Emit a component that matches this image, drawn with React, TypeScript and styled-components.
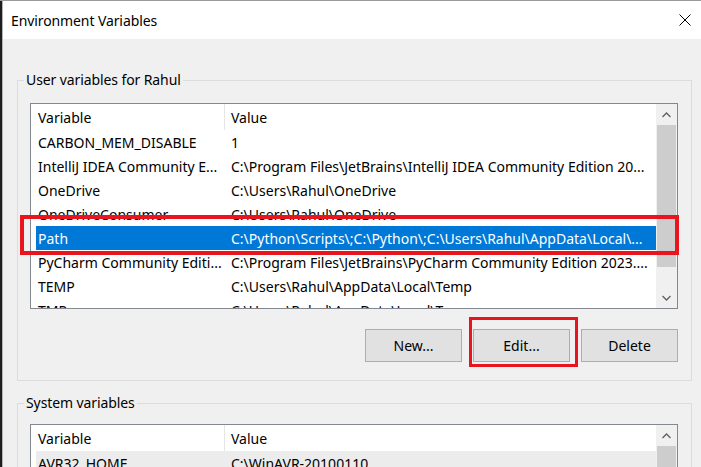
import React from "react";
import styled, { createGlobalStyle } from "styled-components";

const Global = createGlobalStyle`
  html, body { margin: 0; padding: 0; background: #1c1c1c; }
  body { font-family: "Segoe UI", "Noto Sans", sans-serif; overflow: hidden; }
`;

const Screen = styled.div`
  display: flex;
  width: 701px;
  height: 467px;
  overflow: hidden;
  border-top: 1px solid #9a9a9a;
  box-sizing: border-box;
`;

const DesktopEdge = styled.div`
  flex: none;
  width: 2px;
  background: #1e1e1e;
`;

const Window = styled.div`
  flex: 1;
  min-width: 0;
  display: flex;
  flex-direction: column;
  background: #f0f0f0;
  border-left: 1px solid #b4b4b4;
`;

const TitleBar = styled.div`
  flex: none;
  height: 38px;
  background: #ffffff;
  display: flex;
  align-items: center;
  justify-content: space-between;
  padding: 0 10px 0 8px;
`;

const Title = styled.span`
  font-size: 14px;
  letter-spacing: -0.1px;
  color: #000;
`;

const CloseIcon = styled.svg`
  display: block;
  width: 12px;
  height: 12px;
`;

const Body = styled.div`
  padding: 31px 9px 0 14px;
  display: flex;
  flex-direction: column;
`;

const Group = styled.fieldset<{ $mt?: number }>`
  margin: ${(p) => p.$mt ?? 0}px 0 0 0;
  padding: 0 13px 18px 12px;
  border: 1px solid #dcdcdc;
  min-width: 0;
`;

const Legend = styled.legend`
  margin-left: -6px;
  padding: 0 2px;
  font-size: 14px;
  letter-spacing: -0.1px;
  line-height: 20px;
  color: #000;
`;

const ListWrap = styled.div<{ $mt: number; $h: number }>`
  position: relative;
  margin-top: ${(p) => p.$mt}px;
  height: ${(p) => p.$h}px;
`;

const ListBox = styled.div`
  box-sizing: border-box;
  height: 100%;
  border: 1px solid #828790;
  background: #fff;
  display: flex;
  overflow: hidden;
`;

const ListContent = styled.div`
  flex: 1;
  min-width: 0;
  padding-left: 5px;
  overflow: hidden;
`;

const ColumnsRow = styled.div<{ $selected?: boolean; $inactive?: boolean; $header?: boolean }>`
  display: grid;
  grid-template-columns: 189px 1fr;
  height: ${(p) => (p.$header ? 26 : 24)}px;
  align-items: center;
  font-size: 14px;
  color: ${(p) => (p.$selected ? "#fff" : "#000")};
  background: ${(p) => (p.$selected ? "#0078d7" : p.$inactive ? "#ececec" : "transparent")};
`;

const Cell = styled.div<{ $first?: boolean; $divider?: boolean }>`
  height: 100%;
  display: flex;
  align-items: center;
  padding-left: ${(p) => (p.$first ? 2 : 6)}px;
  padding-right: 2px;
  white-space: nowrap;
  overflow: hidden;
  border-right: ${(p) => (p.$divider ? "1px solid #e5e5e5" : "none")};
  box-sizing: border-box;
`;

const ScrollBar = styled.div`
  flex: none;
  width: 21px;
  background: #f0f0f0;
  display: flex;
  flex-direction: column;
`;

const ScrollArrow = styled.div`
  flex: none;
  height: 21px;
  display: flex;
  align-items: center;
  justify-content: center;
`;

const Thumb = styled.div<{ $h: number }>`
  flex: none;
  height: ${(p) => p.$h}px;
  margin: 0 1px;
  background: #cdcdcd;
`;

const Spacer = styled.div`
  flex: 1;
`;

const Chevron = styled.svg`
  display: block;
  width: 9px;
  height: 6px;
`;

const ButtonRow = styled.div`
  margin-top: 20px;
  display: flex;
  justify-content: flex-end;
  gap: 11px;
`;

const ButtonSlot = styled.div`
  position: relative;
`;

const Button = styled.button`
  box-sizing: border-box;
  width: 97px;
  height: 33px;
  padding: 0;
  background: #e1e1e1;
  border: 1px solid #adadad;
  font-family: inherit;
  font-size: 14px;
  color: #000;
  display: block;
`;

const Highlight = styled.div<{ $l: number; $t: number; $w: number; $h: number; $b: number }>`
  position: absolute;
  left: ${(p) => p.$l}px;
  top: ${(p) => p.$t}px;
  width: ${(p) => p.$w}px;
  height: ${(p) => p.$h}px;
  border: ${(p) => p.$b}px solid #e8151f;
  box-sizing: border-box;
  pointer-events: none;
`;

type Row = { name: string; value: string; selected?: boolean; inactive?: boolean };

const userRows: Row[] = [
  { name: "CARBON_MEM_DISABLE", value: "1" },
  { name: "IntelliJ IDEA Community E...", value: "C:\\Program Files\\JetBrains\\IntelliJ IDEA Community Edition 20..." },
  { name: "OneDrive", value: "C:\\Users\\Rahul\\OneDrive" },
  { name: "OneDriveConsumer", value: "C:\\Users\\Rahul\\OneDrive" },
  { name: "Path", value: "C:\\Python\\Scripts\\;C:\\Python\\;C:\\Users\\Rahul\\AppData\\Local\\...", selected: true },
  { name: "PyCharm Community Editi...", value: "C:\\Program Files\\JetBrains\\PyCharm Community Edition 2023...." },
  { name: "TEMP", value: "C:\\Users\\Rahul\\AppData\\Local\\Temp" },
  { name: "TMP", value: "C:\\Users\\Rahul\\AppData\\Local\\Temp" },
];

const systemRows: Row[] = [
  { name: "AVR32_HOME", value: "C:\\WinAVR-20100110", inactive: true },
  { name: "ComSpec", value: "C:\\Windows\\system32\\cmd.exe" },
];

const Up = () => (
  <Chevron viewBox="0 0 9 6">
    <path d="M0.5 5 L4.5 1 L8.5 5" fill="none" stroke="#606060" strokeWidth="1.3" />
  </Chevron>
);

const Down = () => (
  <Chevron viewBox="0 0 9 6">
    <path d="M0.5 1 L4.5 5 L8.5 1" fill="none" stroke="#606060" strokeWidth="1.3" />
  </Chevron>
);

const VarList = ({ rows, thumb }: { rows: Row[]; thumb: number }) => (
  <ListBox>
    <ListContent>
      <ColumnsRow $header>
        <Cell $first $divider>Variable</Cell>
        <Cell>Value</Cell>
      </ColumnsRow>
      {rows.map((r) => (
        <ColumnsRow key={r.name} $selected={r.selected} $inactive={r.inactive}>
          <Cell $first>{r.name}</Cell>
          <Cell>{r.value}</Cell>
        </ColumnsRow>
      ))}
    </ListContent>
    <ScrollBar>
      <ScrollArrow>
        <Up />
      </ScrollArrow>
      <Thumb $h={thumb} />
      <Spacer />
      <ScrollArrow>
        <Down />
      </ScrollArrow>
    </ScrollBar>
  </ListBox>
);

export default function App() {
  return (
    <>
      <Global />
      <Screen>
        <DesktopEdge />
        <Window>
          <TitleBar>
            <Title>Environment Variables</Title>
            <CloseIcon viewBox="0 0 12 12">
              <path d="M0.5 0.5 L11.5 11.5 M11.5 0.5 L0.5 11.5" stroke="#000" strokeWidth="1" fill="none" />
            </CloseIcon>
          </TitleBar>
          <Body>
            <Group>
              <Legend>User variables for Rahul</Legend>
              <ListWrap $mt={13} $h={206}>
                <VarList rows={userRows} thumb={142} />
                <Highlight $l={-10} $t={112} $w={659} $h={40} $b={4} />
              </ListWrap>
              <ButtonRow>
                <Button>New...</Button>
                <ButtonSlot>
                  <Button>Edit...</Button>
                  <Highlight $l={-4} $t={-12} $w={109} $h={50} $b={3} />
                </ButtonSlot>
                <Button>Delete</Button>
              </ButtonRow>
            </Group>
            <Group $mt={12}>
              <Legend>System variables</Legend>
              <ListWrap $mt={11} $h={206}>
                <VarList rows={systemRows} thumb={142} />
              </ListWrap>
            </Group>
          </Body>
        </Window>
      </Screen>
    </>
  );
}
